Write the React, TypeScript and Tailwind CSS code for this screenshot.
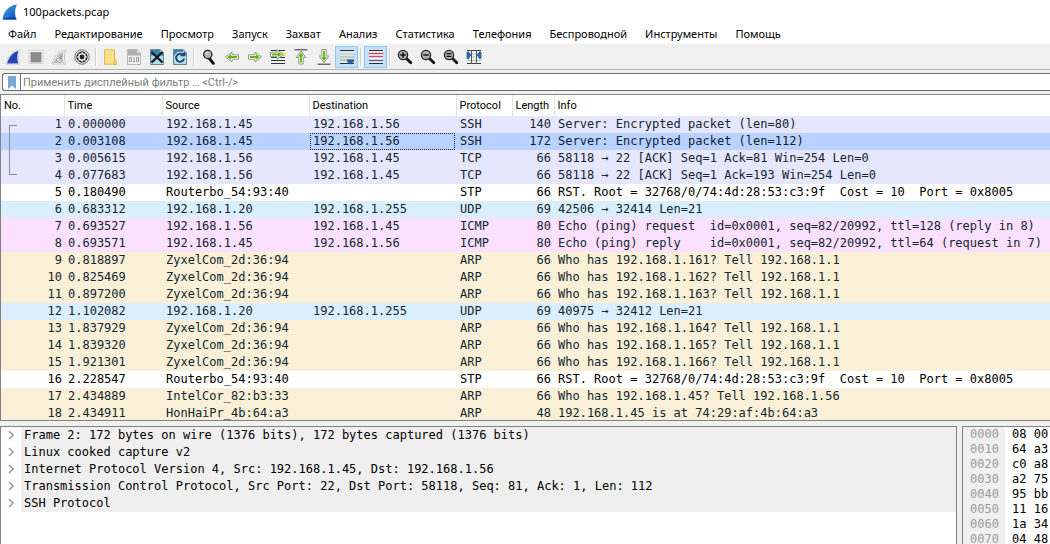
import type { ReactNode } from 'react';

type Kind = 'tcp' | 'selected' | 'stp' | 'udp' | 'icmp' | 'arp';

type Packet = {
  time: string;
  source: string;
  destination: string;
  protocol: string;
  length: number;
  info: string;
  kind: Kind;
};

const rowStyles: Record<Kind, string> = {
  tcp: 'bg-[#e7e6ff] text-[#12272e]',
  selected: 'bg-[#bad2ff] text-[#0d2233]',
  stp: 'bg-white text-black',
  udp: 'bg-[#daeeff] text-[#12272e]',
  icmp: 'bg-[#fce0ff] text-[#12272e]',
  arp: 'bg-[#faf0d7] text-[#12272e]',
};

const p = (
  kind: Kind,
  time: string,
  source: string,
  destination: string,
  protocol: string,
  length: number,
  info: string,
): Packet => ({ kind, time, source, destination, protocol, length, info });

const stpInfo = 'RST. Root = 32768/0/74:4d:28:53:c3:9f  Cost = 10  Port = 0x8005';

const packets: Packet[] = [
  p('tcp', '0.000000', '192.168.1.45', '192.168.1.56', 'SSH', 140, 'Server: Encrypted packet (len=80)'),
  p('selected', '0.003108', '192.168.1.45', '192.168.1.56', 'SSH', 172, 'Server: Encrypted packet (len=112)'),
  p('tcp', '0.005615', '192.168.1.56', '192.168.1.45', 'TCP', 66, '58118 → 22 [ACK] Seq=1 Ack=81 Win=254 Len=0'),
  p('tcp', '0.077683', '192.168.1.56', '192.168.1.45', 'TCP', 66, '58118 → 22 [ACK] Seq=1 Ack=193 Win=254 Len=0'),
  p('stp', '0.180490', 'Routerbo_54:93:40', '', 'STP', 66, stpInfo),
  p('udp', '0.683312', '192.168.1.20', '192.168.1.255', 'UDP', 69, '42506 → 32414 Len=21'),
  p('icmp', '0.693527', '192.168.1.56', '192.168.1.45', 'ICMP', 80, 'Echo (ping) request  id=0x0001, seq=82/20992, ttl=128 (reply in 8)'),
  p('icmp', '0.693571', '192.168.1.45', '192.168.1.56', 'ICMP', 80, 'Echo (ping) reply    id=0x0001, seq=82/20992, ttl=64 (request in 7)'),
  p('arp', '0.818897', 'ZyxelCom_2d:36:94', '', 'ARP', 66, 'Who has 192.168.1.161? Tell 192.168.1.1'),
  p('arp', '0.825469', 'ZyxelCom_2d:36:94', '', 'ARP', 66, 'Who has 192.168.1.162? Tell 192.168.1.1'),
  p('arp', '0.897200', 'ZyxelCom_2d:36:94', '', 'ARP', 66, 'Who has 192.168.1.163? Tell 192.168.1.1'),
  p('udp', '1.102082', '192.168.1.20', '192.168.1.255', 'UDP', 69, '40975 → 32412 Len=21'),
  p('arp', '1.837929', 'ZyxelCom_2d:36:94', '', 'ARP', 66, 'Who has 192.168.1.164? Tell 192.168.1.1'),
  p('arp', '1.839320', 'ZyxelCom_2d:36:94', '', 'ARP', 66, 'Who has 192.168.1.165? Tell 192.168.1.1'),
  p('arp', '1.921301', 'ZyxelCom_2d:36:94', '', 'ARP', 66, 'Who has 192.168.1.166? Tell 192.168.1.1'),
  p('stp', '2.228547', 'Routerbo_54:93:40', '', 'STP', 66, stpInfo),
  p('arp', '2.434889', 'IntelCor_82:b3:33', '', 'ARP', 66, 'Who has 192.168.1.45? Tell 192.168.1.56'),
  p('arp', '2.434911', 'HonHaiPr_4b:64:a3', '', 'ARP', 48, '192.168.1.45 is at 74:29:af:4b:64:a3'),
];

const menus = [
  'Файл',
  'Редактирование',
  'Просмотр',
  'Запуск',
  'Захват',
  'Анализ',
  'Статистика',
  'Телефония',
  'Беспроводной',
  'Инструменты',
  'Помощь',
];

const columns = ['No.', 'Time', 'Source', 'Destination', 'Protocol', 'Length', 'Info'];

const details = [
  'Frame 2: 172 bytes on wire (1376 bits), 172 bytes captured (1376 bits)',
  'Linux cooked capture v2',
  'Internet Protocol Version 4, Src: 192.168.1.45, Dst: 192.168.1.56',
  'Transmission Control Protocol, Src Port: 22, Dst Port: 58118, Seq: 81, Ack: 1, Len: 112',
  'SSH Protocol',
];

const hexRows = [
  ['0000', '08 00'],
  ['0010', '64 a3'],
  ['0020', 'c0 a8'],
  ['0030', 'a2 75'],
  ['0040', '95 bb'],
  ['0050', '11 16'],
  ['0060', '1a 34'],
  ['0070', '04 48'],
];

const mono = "font-['DejaVu_Sans_Mono',monospace] text-[12px]";

function Icon({ children }: { children: ReactNode }) {
  return (
    <svg viewBox="0 0 16 16" className="size-4" fill="none" aria-hidden="true">
      {children}
    </svg>
  );
}

function Magnifier({ children }: { children?: ReactNode }) {
  return (
    <Icon>
      <path d="m9.500 9.500 4.300 4.300" stroke="#151515" strokeWidth="2.800" strokeLinecap="round" />
      <circle cx="6" cy="6" r="4.600" fill="#adb0b0" stroke="#262626" strokeWidth="1.300" />
      {children}
    </Icon>
  );
}

function GreenArrow({ transform }: { transform?: string }) {
  return (
    <g transform={transform}>
      <path
        d="M1.500 5.800H8V3.200L14.600 8 8 12.800V10.200H1.500Z"
        fill="#fff"
        stroke="#8d9b83"
        strokeWidth="1"
        strokeLinejoin="round"
      />
      <path d="M3 7.100H9V5.200L12.900 8 9 10.800V8.900H3Z" fill="#63b50c" />
    </g>
  );
}

function BlueFile({ children }: { children: ReactNode }) {
  return (
    <Icon>
      <path d="M1.500.5H11l3.500 3.500v11.500h-13Z" fill="#a9dcea" stroke="#6b8796" />
      <path d="M2 1h9l3 3v2.500H2Z" fill="#3482b4" />
      <path d="M11 .5V4h3.500Z" fill="#e9f2f8" stroke="#6b8796" strokeWidth=".8" />
      {children}
    </Icon>
  );
}

type Tool = { label: string; icon: ReactNode; active?: boolean };

const toolGroups: Tool[][] = [
  [
    {
      label: 'Начать захват',
      icon: (
        <Icon>
          <path d="M.8 15.300C3 7 7.500 1.500 15.300.8 13 5 13 10.500 15 15.300Z" fill="#fff" stroke="#c9c9c9" strokeWidth=".8" />
          <path d="M2 14.400C4 8 7.500 3 13.500 2 12 6 12 10.500 13.400 14.400Z" fill="#2743b5" />
        </Icon>
      ),
    },
    {
      label: 'Остановить захват',
      icon: (
        <Icon>
          <path d="M1 1.500h14v13H1Z" fill="#fff" stroke="#d2d2d2" />
          <path d="M2.500 3h11v10.500h-11Z" fill="#8c8c8c" />
        </Icon>
      ),
    },
    {
      label: 'Перезапустить захват',
      icon: (
        <Icon>
          <path d="M1 15C3 7 7.500 1.700 15 1 13 5 13 10.500 14.700 15Z" fill="#f4f4f4" stroke="#c4c4c4" />
          <path d="M2.500 14C4.500 8.500 7.500 4 12.500 2.700 11.500 6 12 10.500 13 14Z" fill="#bdbdbd" />
          <path d="M6 8.500v2.300a2.700 2.700 0 1 0 4.500-2" stroke="#fff" strokeWidth="2.600" />
          <path d="M6.300 8.800a2.800 2.800 0 1 0 4.300.2M11.500 6.500 8.800 9l3 1" stroke="#969696" strokeWidth="1.100" />
        </Icon>
      ),
    },
    {
      label: 'Параметры захвата',
      icon: (
        <Icon>
          <circle cx="8" cy="8" r="7.200" fill="#fff" stroke="#6f6f6f" strokeWidth="1" />
          <circle cx="8" cy="8" r="5.700" fill="#222" />
          <circle cx="8" cy="8" r="3.100" fill="#222" stroke="#fff" strokeWidth="1.300" />
          <path d="M8 3v2M8 11v2M3 8h2M11 8h2M4.500 4.500l1.400 1.400M10.100 10.100l1.400 1.400M11.500 4.500l-1.400 1.400M5.900 10.100l-1.400 1.400" stroke="#fff" strokeWidth="1.200" />
          <circle cx="8" cy="8" r="1.800" fill="#222" />
        </Icon>
      ),
    },
  ],
  [
    {
      label: 'Открыть файл',
      icon: (
        <Icon>
          <path d="M1.500.7h10v13l2 1.600h-12Z" fill="#fbe089" stroke="#dcb850" strokeWidth=".9" />
          <path d="M11.500 9.500 13.600 12v3.300h-2.900Z" fill="#f3cf68" stroke="#dcb850" strokeWidth=".8" />
        </Icon>
      ),
    },
    {
      label: 'Сохранить файл',
      icon: (
        <Icon>
          <path d="M1.500.5H11l3.500 3.500v11.500h-13Z" fill="#f0f0f0" stroke="#b9b9b9" />
          <path d="M2 1h9v3h3v2.500H2Z" fill="#adadad" />
          <path d="M11 .5V4h3.500Z" fill="#fff" stroke="#c2c2c2" strokeWidth=".8" />
          <path d="M3.500 8.500h2v4h-2ZM8 8v5M7 12.500h2M10.500 8.500h2v4h-2Z" stroke="#9c9c9c" />
        </Icon>
      ),
    },
    {
      label: 'Закрыть файл',
      icon: (
        <BlueFile>
          <path d="m2.500 3 11 10.500M13.500 3l-11 10.500" stroke="#161b20" strokeWidth="2.400" />
        </BlueFile>
      ),
    },
    {
      label: 'Перезагрузить файл',
      icon: (
        <BlueFile>
          <path d="M12 9.500A4 4 0 1 1 10.800 5.500" stroke="#fff" strokeWidth="3.600" />
          <path d="M12 9.500A4 4 0 1 1 10.800 5.800" stroke="#184b7b" strokeWidth="2.200" />
          <path d="M8 7.300h5V2.500Z" fill="#184b7b" />
        </BlueFile>
      ),
    },
  ],
  [
    {
      label: 'Найти пакет',
      icon: (
        <Icon>
          <path d="m8.300 9.300 4 5" stroke="#111" strokeWidth="2.900" strokeLinecap="round" />
          <circle cx="6.800" cy="5.500" r="4.100" fill="#b4b9bb" stroke="#202020" strokeWidth="1.300" />
          <path d="M4.500 5a2.500 2.500 0 0 1 2.200-2" stroke="#fff" />
        </Icon>
      ),
    },
    { label: 'Предыдущий пакет', icon: <Icon><GreenArrow transform="matrix(-1 0 0 1 16 0)" /></Icon> },
    { label: 'Следующий пакет', icon: <Icon><GreenArrow /></Icon> },
    {
      label: 'Перейти к пакету',
      icon: (
        <Icon>
          <path d="M1 1.500h14M1 11.500h14M1 14.500h14" stroke="#303638" strokeWidth="1.200" />
          <path d="M10 3.500h5.500v4H10Z" fill="#f5df7c" />
          <path d="M1 8.500h14" stroke="#303638" />
          <GreenArrow transform="translate(-1 -2.500)" />
        </Icon>
      ),
    },
    {
      label: 'Первый пакет',
      icon: (
        <Icon>
          <path d="M1.500.8h13" stroke="#4d5154" strokeWidth="1.200" />
          <GreenArrow transform="matrix(0 -1 1 0 0 16.500)" />
        </Icon>
      ),
    },
    {
      label: 'Последний пакет',
      icon: (
        <Icon>
          <GreenArrow transform="matrix(0 1 -1 0 16 -1)" />
          <path d="M1.500 15.200h13" stroke="#4d5154" strokeWidth="1.200" />
        </Icon>
      ),
    },
    {
      label: 'Автопрокрутка',
      active: true,
      icon: (
        <Icon>
          <path d="M1 2h14v12.500H1Z" fill="#dcebf0" />
          <path d="M1 1.500h14M1 14.500h14" stroke="#263036" strokeWidth="1.200" />
          <path d="M1 5h14" stroke="#c8c9a6" />
          <path d="M1 8h14" stroke="#a9b1a5" />
          <path d="M1 11h14" stroke="#8c9aa0" />
          <path d="M8 10.500h7v2L11.500 15.500 8 12.500Z" fill="#315f9d" />
        </Icon>
      ),
    },
  ],
  [
    {
      label: 'Раскрасить пакеты',
      active: true,
      icon: (
        <Icon>
          <path d="M1 1.500h14v13H1Z" fill="#e2e9f3" />
          <path d="M1 1.500h14M1 14.500h14" stroke="#24303a" strokeWidth="1.200" />
          <path d="M1 4.500h14" stroke="#d8423d" strokeWidth="1.200" />
          <path d="M1 7.500h14" stroke="#c9504f" strokeWidth="1.200" />
          <path d="M1 11.500h14" stroke="#5d5488" strokeWidth="1.200" />
        </Icon>
      ),
    },
  ],
  [
    { label: 'Увеличить', icon: <Magnifier><path d="M3.300 6h5.400M6 3.300v5.400" stroke="#111" strokeWidth="1.400" /></Magnifier> },
    { label: 'Уменьшить', icon: <Magnifier><path d="M3.300 6h5.400" stroke="#111" strokeWidth="1.400" /></Magnifier> },
    { label: 'Обычный размер', icon: <Magnifier><path d="M3.500 4.700h5M3.500 7.300h5" stroke="#111" strokeWidth="1.200" /></Magnifier> },
    {
      label: 'Изменить размер столбцов',
      icon: (
        <Icon>
          <path d="M1 1.500h14v13H1Z" fill="#f4f4f2" />
          <path d="M1 1.500h14M1 14.500h14" stroke="#394044" strokeWidth="1.200" />
          <path d="M1 5h14M1 8h14M1 11.500h14" stroke="#b5b8b8" />
          <path d="M5.500 1v14M10.500 1v14" stroke="#555b5e" />
          <path d="M1 3h2v1l2 2-2 2v1.500H1ZM15 3h-2v1l-2 2 2 2v1.500h2Z" fill="#2b63a4" stroke="#2b63a4" strokeWidth=".8" />
        </Icon>
      ),
    },
  ],
];

function Bracket({ index }: { index: number }) {
  if (index > 3) return <span />;
  if (index === 0) return <span className="ml-2 h-2 w-2 self-end border-t border-l border-[#8c8c98]" />;
  if (index === 3) return <span className="ml-2 h-2 w-2 self-start border-b border-l border-[#8c8c98]" />;
  return <span className="ml-2 w-2 self-stretch border-l border-[#8c8c98]" />;
}

export default function App() {
  return (
    <div className="flex h-screen flex-col overflow-hidden bg-[#f0f0f0] font-['Noto_Sans',sans-serif] text-[11px] text-black">
      <header className="bg-white">
        <div className="flex h-6 items-center gap-[5px] pl-0.5">
          <svg viewBox="0 0 16 16" className="size-4" aria-hidden="true">
            <defs>
              <linearGradient id="fin" x1="0" y1="0" x2="1" y2="1">
                <stop offset="0" stopColor="#46a4ec" />
                <stop offset="1" stopColor="#0b4db5" />
              </linearGradient>
            </defs>
            <path d="M.5 15.500C1.500 7.500 6.500 1.500 15 .5 12.500 5 12.500 10.500 14.500 15.500Z" fill="url(#fin)" />
            <path d="M.5 15.500c3-2 10-2.500 13.500-1.500l.5 1.500Z" fill="#0a3f9a" />
          </svg>
          <h1 className="leading-4">100packets.pcap</h1>
        </div>
        <nav className="flex h-5 items-center gap-[18px] pl-2" aria-label="Главное меню">
          {menus.map((m) => (
            <button key={m} type="button" className="leading-4 whitespace-nowrap">
              {m}
            </button>
          ))}
        </nav>
      </header>

      <div role="toolbar" aria-label="Инструменты" className="flex h-[26px] items-center border-b border-[#b4b4b4] pl-px">
        {toolGroups.map((group, g) => (
          <div key={g} className="flex items-center">
            {g > 0 && <span className="mx-[2px] h-[18px] w-[2px] border-l border-[#d0d0d0] bg-white" />}
            {group.map((t) => (
              <button
                key={t.label}
                type="button"
                aria-label={t.label}
                aria-pressed={t.active}
                className={
                  t.active
                    ? 'flex h-[22px] w-[23px] items-center justify-center border border-[#90c8f6] bg-[#c6e0f7]'
                    : 'flex h-[22px] w-[23px] items-center justify-center'
                }
              >
                {t.icon}
              </button>
            ))}
          </div>
        ))}
      </div>

      <div className="py-[3px] pl-[2px]">
        <div className="flex h-[18px] items-stretch rounded-l-[3px] border border-r-0 border-[#6e6e6e] bg-white">
          <button type="button" aria-label="Закладки" className="flex w-[18px] items-center justify-center border-r border-[#6e6e6e]">
            <svg viewBox="0 0 8 13" className="h-[13px] w-2" aria-hidden="true">
              <path d="M0 0h8v13L4 9.500 0 13Z" fill="#79a6d2" />
            </svg>
          </button>
          <input
            type="text"
            aria-label="Дисплейный фильтр"
            placeholder="Применить дисплейный фильтр … <Ctrl-/>"
            className="min-w-0 flex-1 bg-transparent pt-px pl-0.5 font-['Roboto',sans-serif] text-[11px] leading-4 outline-none placeholder:text-[#7d7d7d]"
          />
        </div>
      </div>

      <main className="flex min-h-0 flex-1 flex-col gap-[5px]">
        <section className="min-h-0 grow-[326] basis-0 overflow-hidden border border-r-0 border-[#828282] bg-white">
          <table className="w-full table-fixed border-collapse">
            <colgroup>
              <col className="w-[63px]" />
              <col className="w-[98px]" />
              <col className="w-[147px]" />
              <col className="w-[147px]" />
              <col className="w-[56px]" />
              <col className="w-[42px]" />
              <col />
            </colgroup>
            <thead>
              <tr className="h-[21px] text-left font-['Roboto',sans-serif] leading-4">
                {columns.map((c) => (
                  <th key={c} className="border-r border-[#e2e2e2] p-0 pl-[3px] font-normal last:border-r-0">
                    {c}
                  </th>
                ))}
              </tr>
            </thead>
            <tbody className={mono}>
              {packets.map((k, i) => (
                <tr key={i} className={`h-[17px] leading-[17px] whitespace-pre ${rowStyles[k.kind]}`}>
                  <td className="p-0">
                    <div className="flex h-[17px] items-center justify-between pr-0.5">
                      <Bracket index={i} />
                      <span>{i + 1}</span>
                    </div>
                  </td>
                  <td className="p-0 pl-1">{k.time}</td>
                  <td className="p-0 pl-1">{k.source}</td>
                  <td className="p-0 pl-px">
                    <div
                      className={
                        k.kind === 'selected'
                          ? 'mr-px h-[17px] border border-dotted border-[#0d2233] pl-0.5 leading-[15px]'
                          : 'h-[17px] pl-[3px]'
                      }
                    >
                      {k.destination}
                    </div>
                  </td>
                  <td className="p-0 pl-1">{k.protocol}</td>
                  <td className="p-0 pr-[3px] text-right">{k.length}</td>
                  <td className="p-0 pl-1">{k.info}</td>
                </tr>
              ))}
            </tbody>
          </table>
        </section>

        <div className={`flex min-h-0 grow-[119] basis-0 gap-[5px] ${mono}`}>
          <section className="min-w-0 flex-1 overflow-hidden border border-b-0 border-[#828282] bg-white">
            <ul>
              {details.map((d) => (
                <li key={d} className="flex h-[17px] items-stretch leading-[17px] whitespace-pre">
                  <button type="button" aria-label={`Развернуть ${d}`} className="flex w-5 items-center justify-center">
                    <svg viewBox="0 0 6 10" className="h-[10px] w-1.5" fill="none" aria-hidden="true">
                      <path d="m1 1 4 4-4 4" stroke="#a0a0a0" strokeWidth="1.600" />
                    </svg>
                  </button>
                  <span className="flex-1 bg-[#efefef] pl-[3px]">{d}</span>
                </li>
              ))}
            </ul>
          </section>
          <section className="w-[88px] overflow-hidden border-t border-l border-[#828282] bg-white">
            {hexRows.map(([offset, bytes]) => (
              <div key={offset} className="flex h-[15px] leading-[15px] whitespace-pre">
                <span className="w-[42px] bg-[#f0f0f0] pl-[7px] text-[#9c9c9c]">{offset}</span>
                <span className="pl-[7px]">{bytes}</span>
              </div>
            ))}
          </section>
        </div>
      </main>
    </div>
  );
}
